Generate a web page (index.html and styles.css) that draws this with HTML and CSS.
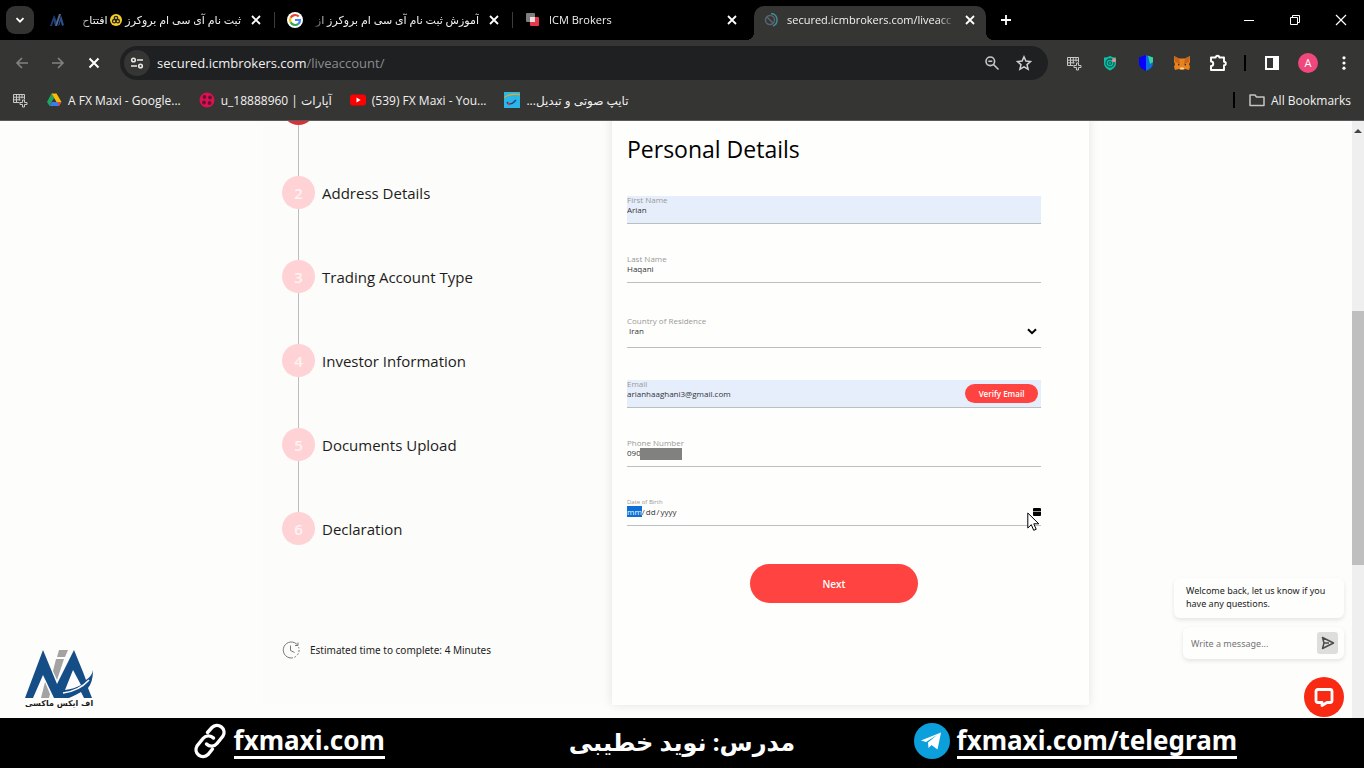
FILE: index.html
```
<!DOCTYPE html>
<html lang="en">
<head>
    <meta charset="UTF-8">
    <meta name="viewport" content="width=device-width, initial-scale=1.0">
    <title>ICM Brokers</title>
    <link rel="stylesheet" href="styles.css">
</head>
<body>
    <!-- Tabs -->
    <div class="tab-strip">
        <button class="tab-search" aria-label="Search tabs">
            <svg width="12" height="12" viewBox="0 0 12 12"><path d="M2.5 4.2 6 7.7l3.5-3.5" fill="none" stroke="#fff" stroke-width="1.8"/></svg>
        </button>
        <div class="tab">
            <svg class="favicon" viewBox="0 0 16 16"><path d="M1 14 5 3l3 7-2 4-1.500-5L3 14z" fill="#1d3f78"/><path d="m6 14 4-12h2L8 14z" fill="#56688c"/><path d="m9 14 3-11 3 10-2 1-1.500-5-1 4z" fill="#28508f"/></svg>
            <span class="tab-title" dir="rtl">ثبت نام آی سی ام بروکرز <svg class="emoji" viewBox="0 0 12 12"><circle cx="6" cy="6" r="6" fill="#f5cf2b"/><g fill="none" stroke="#2b2612" stroke-width="1.300"><circle cx="6" cy="4" r="1.700"/><circle cx="4.200" cy="7.200" r="1.700"/><circle cx="7.800" cy="7.200" r="1.700"/></g></svg> افتتاح</span>
            <button class="tab-close" aria-label="Close tab"><svg viewBox="0 0 14 14"><path d="m3 3 8 8m0-8-8 8"/></svg></button>
        </div>
        <div class="tab">
            <svg class="favicon" viewBox="0 0 16 16"><circle cx="8" cy="8" r="8" fill="#fff"/><g fill="none" stroke-width="2.200"><path d="M11.700 4.600A5 5 0 0 0 3.600 5.700" stroke="#ea4335"/><path d="M3.600 5.700a5 5 0 0 0 0 4.600" stroke="#fbbc05"/><path d="M3.600 10.300a5 5 0 0 0 7.700 1.500" stroke="#34a853"/><path d="M11.300 11.800A5 5 0 0 0 13 8H8" stroke="#4285f4"/></g></svg>
            <span class="tab-title" dir="rtl">آموزش ثبت نام آی سی ام بروکرز از</span>
            <button class="tab-close" aria-label="Close tab"><svg viewBox="0 0 14 14"><path d="m3 3 8 8m0-8-8 8"/></svg></button>
        </div>
        <div class="tab">
            <svg class="favicon" viewBox="0 0 16 16"><rect x="1" y="1" width="9" height="9" rx="1" fill="#807d7e"/><rect x="5" y="5" width="9" height="9" rx="1" fill="#e8374a"/><path d="M5 5h5v5H5z" fill="#f3dfe1"/></svg>
            <span class="tab-title">ICM Brokers</span>
            <button class="tab-close" aria-label="Close tab"><svg viewBox="0 0 14 14"><path d="m3 3 8 8m0-8-8 8"/></svg></button>
        </div>
        <div class="tab active">
            <svg class="favicon" viewBox="0 0 16 16"><circle cx="7" cy="8" r="4.500" fill="none" stroke="#5a6470" stroke-width="1.500"/><path d="m4 5 6 6" stroke="#5a6470" stroke-width="1.500"/><path d="M8 1.500A6.500 6.500 0 0 1 10 14" fill="none" stroke="#3f8a96" stroke-width="1.500"/></svg>
            <span class="tab-title">secured.icmbrokers.com/liveacc</span>
            <button class="tab-close" aria-label="Close tab"><svg viewBox="0 0 14 14"><path d="m3 3 8 8m0-8-8 8"/></svg></button>
        </div>
        <button class="new-tab" aria-label="New tab"><svg width="12" height="12" viewBox="0 0 12 12"><path d="M6 1v10M1 6h10" stroke="#fff" stroke-width="1.800"/></svg></button>
        <div class="window-buttons">
            <button aria-label="Minimize"><svg width="12" height="12" viewBox="0 0 12 12"><path d="M1 6.500h10" stroke="#fff"/></svg></button>
            <button aria-label="Restore"><svg width="12" height="12" viewBox="0 0 12 12"><path d="M1.500 3.500h7v7h-7zM3.500 3.500v-2h7v7h-2" fill="none" stroke="#fff"/></svg></button>
            <button aria-label="Close"><svg width="12" height="12" viewBox="0 0 12 12"><path d="m1 1 10 10m0-10L1 11" stroke="#fff" stroke-width="1.200"/></svg></button>
        </div>
    </div>

    <!-- Address bar -->
    <div class="toolbar">
        <button class="tool" aria-label="Back"><svg width="16" height="16" viewBox="0 0 16 16"><path d="M14 8H3m5-5L3 8l5 5" fill="none" stroke="#83827f" stroke-width="1.600"/></svg></button>
        <button class="tool" aria-label="Forward"><svg width="16" height="16" viewBox="0 0 16 16"><path d="M2 8h11M8 3l5 5-5 5" fill="none" stroke="#83827f" stroke-width="1.600"/></svg></button>
        <button class="tool" aria-label="Stop"><svg width="16" height="16" viewBox="0 0 16 16"><path d="m3.500 3.500 9 9m0-9-9 9" stroke="#fff" stroke-width="2"/></svg></button>
        <div class="omnibox">
            <button class="site-info" aria-label="Site information"><svg width="14" height="14" viewBox="0 0 14 14"><g fill="none" stroke="#e8e8e8" stroke-width="1.600"><circle cx="3.500" cy="4" r="1.800"/><path d="M7 4h6M1 10h6"/><circle cx="10.500" cy="10" r="1.800"/></g></svg></button>
            <div class="url">secured.icmbrokers.com<span>/liveaccount/</span></div>
            <button class="omni-icon" aria-label="Zoom"><svg width="16" height="16" viewBox="0 0 16 16"><g fill="none" stroke="#c7c7c7" stroke-width="1.600"><circle cx="6.300" cy="6.300" r="4.300"/><path d="m9.500 9.500 5 5M4.300 6.300h4"/></g></svg></button>
            <button class="omni-icon" aria-label="Bookmark"><svg width="16" height="16" viewBox="0 0 16 16"><path d="m8 1.800 1.900 4.300 4.600.4-3.500 3.100 1.100 4.600L8 11.800l-4.100 2.400L5 9.600 1.500 6.500l4.600-.4z" fill="none" stroke="#d0d0d0" stroke-width="1.500"/></svg></button>
        </div>
        <button class="tool" aria-label="Apps"><svg width="16" height="16" viewBox="0 0 16 16"><g fill="none" stroke="#c9c9c9"><path d="M1.500 2.500h11v5M1.500 2.500v8h6M1.500 5.200h11M1.500 7.800h7M4.500 2.500v8M7.300 2.500v6M10 2.500v4"/></g><path d="M10.500 8v2.500H8v2h2.500V15h2v-2.500H15v-2h-2.500V8z" fill="#33332f" stroke="#c9c9c9"/></svg></button>
        <button class="tool" aria-label="Shield extension"><svg width="16" height="16" viewBox="0 0 16 16"><path d="M8 1c2 1 4 1.500 6 1.500V8c0 4-3 6-6 7.500C5 14 2 12 2 8V2.500C4 2.500 6 2 8 1z" fill="#10bfa3"/><circle cx="8" cy="8" r="4" fill="none" stroke="#0b5d59" stroke-width="1.300"/><circle cx="8" cy="8" r="1.500" fill="none" stroke="#0b5d59" stroke-width="1.200"/><circle cx="12" cy="5.300" r="2" fill="#f08b8b"/></svg></button>
        <button class="tool" aria-label="Trust wallet"><svg width="16" height="16" viewBox="0 0 16 16"><path d="M8 0v16C4 14 1 12 1 8V2.500z" fill="#0500ff"/><path d="m8 0 7 2.500V8c0 4-3 6-7 8z" fill="#0b6fe0"/><path d="m10 .7 5 1.800V7l-3 2z" fill="#35d69b"/></svg></button>
        <button class="tool" aria-label="MetaMask"><svg width="18" height="16" viewBox="0 0 18 16"><path d="M1 1l5 2.500h6L17 1v6l-1 2 1 3-1 3-4-1-1.500 1h-3L6 14l-4 1-1-3 1-3-1-2z" fill="#e8821e"/><path d="m1 1 5 2.500L7 9 2 7zM17 1l-5 2.500L11 9l5-2z" fill="#c9641c"/><path d="m5 8.500 2 1.500-2 .5zm8 0L11 10l2 .5z" fill="#3b2a1f"/><path d="M7.500 12.500h3l.5 1.500H7z" fill="#f0d8c0"/></svg></button>
        <button class="tool" aria-label="Extensions"><svg width="20" height="18" viewBox="0 0 20 18"><path d="M3 3.500h4.700a1.800 1.800 0 0 1 3.600 0H16v4.200a1.800 1.800 0 0 1 0 3.600V16H3v-4a2.200 2.200 0 0 0 0-4.500z" fill="none" stroke="#fff" stroke-width="1.900" stroke-linejoin="round"/></svg></button>
        <span class="tool-separator"></span>
        <button class="tool" aria-label="Side panel"><svg width="16" height="16" viewBox="0 0 16 16"><path d="M2 2h12v12H2z" fill="none" stroke="#fff" stroke-width="2"/><path d="M9 2h5v12H9z" fill="#fff"/></svg></button>
        <button class="tool"><span class="avatar">A</span></button>
        <button class="tool" aria-label="Menu"><svg width="16" height="16" viewBox="0 0 16 16" fill="#fff"><circle cx="8" cy="2.800" r="1.600"/><circle cx="8" cy="8" r="1.600"/><circle cx="8" cy="13.200" r="1.600"/></svg></button>
    </div>

    <!-- Bookmarks -->
    <div class="bookmarks">
        <a href="#" aria-label="Apps"><svg width="16" height="16" viewBox="0 0 16 16"><g fill="none" stroke="#c9c9c9"><path d="M1.500 2.500h11v5M1.500 2.500v8h6M1.500 5.200h11M1.500 7.800h7M4.500 2.500v8M7.300 2.500v6M10 2.500v4"/></g><path d="M10.500 8v2.500H8v2h2.500V15h2v-2.500H15v-2h-2.500V8z" fill="#33332f" stroke="#c9c9c9"/></svg></a>
        <a href="#"><svg width="16" height="16" viewBox="0 0 16 16"><path d="M5.500 1.500 1 10l2.500 4L8 6z" fill="#21a45d"/><path d="M5.500 1.500h5L15.500 10h-5z" fill="#fbbc04"/><path d="M3.500 14 6 10h9.500L13 14z" fill="#3a7cec"/><path d="m11.500 10 1.500 4 2.500-4z" fill="#e94335"/></svg>A FX Maxi - Google...</a>
        <a href="#"><svg width="16" height="16" viewBox="0 0 16 16"><circle cx="8" cy="8" r="7.500" fill="#df0f50"/><g fill="#5d1735"><circle cx="5.500" cy="5" r="1.900"/><circle cx="11" cy="5.500" r="1.900"/><circle cx="5" cy="10.500" r="1.900"/><circle cx="10.500" cy="11" r="1.900"/></g></svg><span>u_18888960 | آپارات</span></a>
        <a href="#"><svg width="16" height="16" viewBox="0 0 16 16"><rect y="2.500" width="16" height="11" rx="3" fill="#f00"/><path d="m6.500 5.500 4.200 2.500-4.200 2.500z" fill="#fff"/></svg>(539) FX Maxi - You...</a>
        <a href="#"><svg width="16" height="16" viewBox="0 0 16 16"><path d="M0 0h16v16H0z" fill="#29b6e8"/><path d="M0 5c5-4 10-4 16-3v1.500C10 2.500 5 3 0 6z" fill="#e0a72b"/><path d="M3 10c1 3 5 2 7 0l2-2" fill="none" stroke="#2a3f77" stroke-width="1.500"/><circle cx="5" cy="12" r="1.200" fill="#d13838"/></svg><span dir="rtl">تایپ صوتی و تبدیل...</span></a>
        <a href="#" class="all-bookmarks"><svg width="16" height="16" viewBox="0 0 16 16"><path d="M1 3h5l1.500 2H15v8.500H1z" fill="none" stroke="#c4c4c4" stroke-width="1.500" stroke-linejoin="round"/></svg>All Bookmarks</a>
    </div>

    <!-- Page -->
    <main class="viewport">
        <div class="page">
            <div class="account">
                <aside class="stepper">
                    <ol class="steps">
                        <li class="done"><span class="circle"></span></li>
                        <li><span class="circle">2</span>Address Details</li>
                        <li><span class="circle">3</span>Trading Account Type</li>
                        <li><span class="circle">4</span>Investor Information</li>
                        <li><span class="circle">5</span>Documents Upload</li>
                        <li><span class="circle">6</span>Declaration</li>
                    </ol>
                    <p class="estimate">
                        <svg width="18" height="18" viewBox="0 0 18 18"><g fill="none" stroke="#777"><path d="M15.500 4A8 8 0 1 0 9 17"/><path d="M9 17a8 8 0 0 0 7.500-11" stroke-dasharray="2 1.500"/><path d="M8.500 4.500v5l4 2M13 4.500h3v-3"/></g></svg>
                        Estimated time to complete: 4 Minutes
                    </p>
                </aside>
                <form class="card">
                    <h1>Personal Details</h1>
                    <div class="field filled">
                        <label for="firstName">First Name</label>
                        <input type="text" id="firstName" value="Arian">
                    </div>
                    <div class="field">
                        <label for="lastName">Last Name</label>
                        <input type="text" id="lastName" value="Haqani">
                    </div>
                    <div class="field country">
                        <label for="country">Country of Residence</label>
                        <select id="country"><option>Iran</option></select>
                        <svg class="chevron" width="10" height="7" viewBox="0 0 10 7"><path d="m1 1.200 4 4 4-4" fill="none" stroke="#000" stroke-width="2"/></svg>
                    </div>
                    <div class="field filled">
                        <label for="email">Email</label>
                        <input type="email" id="email" value="arianhaaghani3@gmail.com">
                        <button type="button" class="verify">Verify Email</button>
                    </div>
                    <div class="field">
                        <label for="phone">Phone Number</label>
                        <input type="tel" id="phone" value="090">
                        <span class="redacted"></span>
                    </div>
                    <div class="field birth">
                        <label for="birth">Date of Birth</label>
                        <input type="date" id="birth">
                        <svg class="cursor" width="13" height="20" viewBox="0 0 13 20"><path d="M.8 1v15l3.500-3.300 2.400 5.600 2.500-1-2.400-5.500h5z" fill="#fff" stroke="#000"/></svg>
                    </div>
                    <button type="button" class="next">Next</button>
                </form>
            </div>

            <div class="watermark">
                <svg width="68" height="48" viewBox="0 0 68 48"><path d="M0 48 18 0l14 34L49 0l9 22 3 8q6-4 7-10 0 12-5 18l4 10h-8l-3-6q-5 3-12 6H29L18 25 8 48z" fill="#154d87"/><path d="m48 20-8 20q9-1 16-5z" fill="#fdfdfb"/><path d="M38 43q16-2 26-13" fill="none" stroke="#fdfdfb" stroke-width="1.500"/><path d="M34 0h9l-3 7h-8zM31 9h8l-7 21-4-9zM20 32l5 12-1 4h-8z" fill="#a3a3a3"/></svg>
                <span dir="rtl">اف ایکس ماکسی</span>
            </div>

            <div class="chat">
                <p class="chat-bubble">Welcome back, let us know if you have any questions.</p>
                <div class="chat-box">
                    <input type="text" placeholder="Write a message..." aria-label="Write a message">
                    <button class="send" aria-label="Send"><svg width="14" height="14" viewBox="0 0 14 14"><path d="m1.500 1.500 11 5.500-11 5.500L3 7zM3 7h5" fill="none" stroke="#4b4b4b" stroke-width="1.500" stroke-linejoin="round"/></svg></button>
                </div>
                <button class="chat-toggle" aria-label="Chat"><svg width="20" height="20" viewBox="0 0 20 20"><path d="M4 2.500h12q2 0 2 2v9q0 2-2 2h-3L8 18.500v-3H4q-2 0-2-2v-9q0-2 2-2z" fill="none" stroke="#fff" stroke-width="2.800" stroke-linejoin="round"/></svg></button>
            </div>
        </div>
        <div class="scrollbar">
            <svg width="8" height="5" viewBox="0 0 8 5"><path d="m0 5 4-4 4 4z" fill="#444"/></svg>
            <div class="thumb"></div>
        </div>
    </main>

    <!-- Banner -->
    <footer class="banner">
        <div class="banner-item">
            <svg width="34" height="36" viewBox="0 0 34 36"><g fill="none" stroke="#fff" stroke-width="3.400" stroke-linecap="round"><path d="M14.500 9.500 19 4.500a7 7 0 0 1 11 8.500l-6 7.500a7 7 0 0 1-10.500.5"/><path d="m19.500 26-4.500 5.500A7 7 0 0 1 4 23l6-7.500a7 7 0 0 1 10.500-.5"/></g></svg>
            <a href="#">fxmaxi.com</a>
        </div>
        <div class="banner-item teacher" dir="rtl">مدرس: نوید خطیبی</div>
        <div class="banner-item">
            <svg width="36" height="36" viewBox="0 0 36 36"><circle cx="18" cy="18" r="18" fill="#0ba0dc"/><path d="m7 17.500 20-8-3.500 17-6-4.500-3 3-.5-5.500 9-7.500-11 7z" fill="#fff"/></svg>
            <a href="#">fxmaxi.com/telegram</a>
        </div>
    </footer>
</body>
</html>
```
FILE: styles.css
```
* {
    box-sizing: border-box;
}
body {
    margin: 0;
    height: 100vh;
    display: flex;
    flex-direction: column;
    font-family: "Open Sans", "DejaVu Sans", sans-serif;
    color: #1c1c1c;
    overflow: hidden;
}
button {
    font-family: inherit;
    border: none;
    padding: 0;
    background: none;
    display: flex;
    align-items: center;
    justify-content: center;
    cursor: pointer;
}
svg {
    flex: none;
}

/* tabs */
.tab-strip {
    height: 40px;
    flex: none;
    display: flex;
    align-items: center;
    background: #000;
    padding-left: 6px;
}
.tab-search {
    width: 28px;
    height: 28px;
    margin-right: 3px;
    border-radius: 9px;
    background: #333331;
}
.tab {
    position: relative;
    flex: 0 1 238px;
    min-width: 0;
    height: 34px;
    align-self: flex-end;
    display: flex;
    align-items: center;
    gap: 8px;
    padding: 0 12px 6px;
    color: #f1f1f1;
}
.tab:not(.active)::after {
    content: "";
    position: absolute;
    right: 0;
    width: 1px;
    height: 16px;
    background: #3c3c3c;
}
.tab:nth-child(4)::after {
    display: none;
}
.tab.active {
    flex-basis: 232px;
    margin: 0 3px;
    padding: 0 9px 6px;
    background: #353533;
    border-radius: 10px 10px 0 0;
}
.tab.active::before,
.tab.active::after {
    content: "";
    position: absolute;
    bottom: 0;
    width: 8px;
    height: 8px;
}
.tab.active::before {
    right: 100%;
    background: radial-gradient(circle at 0 0, transparent 8px, #353533 8px);
}
.tab.active::after {
    left: 100%;
    background: radial-gradient(circle at 100% 0, transparent 8px, #353533 8px);
}
.favicon {
    width: 16px;
    height: 16px;
}
.tab-title {
    flex: 1;
    min-width: 0;
    overflow: hidden;
    white-space: nowrap;
    font-size: 11px;
    line-height: 20px;
    -webkit-mask-image: linear-gradient(to right, #000 90%, transparent);
    mask-image: linear-gradient(to right, #000 90%, transparent);
}
.tab-title[dir="rtl"] {
    -webkit-mask-image: linear-gradient(to left, #000 90%, transparent);
    mask-image: linear-gradient(to left, #000 90%, transparent);
}
.emoji {
    width: 12px;
    height: 12px;
    vertical-align: -2px;
}
.tab-close svg {
    width: 14px;
    height: 14px;
    stroke: #fff;
    stroke-width: 1.8;
}
.new-tab {
    width: 28px;
    height: 28px;
    margin-left: 3px;
}
.window-buttons {
    display: flex;
    margin-left: auto;
}
.window-buttons button {
    width: 46px;
    height: 40px;
}

/* toolbar */
.toolbar {
    height: 46px;
    flex: none;
    display: flex;
    align-items: center;
    background: #353533;
    padding: 0 2px 0 4px;
}
.tool {
    width: 36px;
    height: 34px;
    flex: none;
}
.omnibox {
    flex: 1;
    min-width: 0;
    height: 34px;
    display: flex;
    align-items: center;
    margin: 0 8px;
    padding: 0 8px 0 4px;
    border-radius: 17px;
    background: #1f2022;
}
.site-info {
    width: 26px;
    height: 26px;
    border-radius: 13px;
    background: #353533;
}
.url {
    flex: 1;
    padding-left: 7px;
    font-size: 13px;
    color: #f0f0f0;
}
.url span {
    color: #8d8d8d;
}
.omni-icon {
    width: 32px;
    height: 32px;
}
.tool-separator {
    width: 2px;
    height: 16px;
    margin: 0 8px;
    background: #000;
}
.avatar {
    width: 20px;
    height: 20px;
    border-radius: 10px;
    background: #f0487c;
    color: #fff;
    font-size: 11px;
    line-height: 20px;
}

/* bookmarks */
.bookmarks {
    height: 35px;
    flex: none;
    display: flex;
    align-items: center;
    gap: 18px;
    padding: 0 13px 6px 12px;
    background: #353533;
    border-bottom: 1px solid #5b5b5b;
}
.bookmarks a {
    display: flex;
    align-items: center;
    gap: 6px;
    height: 28px;
    color: #f1f1f1;
    font-size: 12px;
    text-decoration: none;
    white-space: nowrap;
}
.bookmarks .all-bookmarks {
    margin-left: auto;
}
.all-bookmarks::before {
    content: "";
    width: 2px;
    height: 16px;
    margin-right: 8px;
    background: #000;
}

/* page */
.viewport {
    flex: 1;
    min-height: 0;
    display: flex;
    background: #fdfdfb;
}
.page {
    position: relative;
    flex: 1;
    min-width: 0;
    overflow: hidden;
}
.account {
    display: grid;
    grid-template-columns: 349px 1fr;
    max-width: 826px;
    /* scrolled part of the form */
    margin: -29px auto 0;
}
.stepper {
    padding-left: 19px;
    background: #fcfcfa;
}
.steps {
    list-style: none;
    margin: 0;
    padding: 0;
}
.steps li {
    position: relative;
    display: flex;
    align-items: center;
    gap: 7px;
    height: 33px;
    margin-bottom: 51px;
    font-size: 15px;
}
.steps li:not(:last-child)::after {
    content: "";
    position: absolute;
    left: 16px;
    top: 33px;
    width: 1px;
    height: 51px;
    background: #bdbdbd;
}
.circle {
    width: 33px;
    height: 33px;
    border-radius: 17px;
    background: #ffd2d6;
    color: #fff3f3;
    font-size: 15px;
    font-weight: 600;
    line-height: 35px;
    text-align: center;
}
.done .circle {
    background: #d83236;
}
.estimate {
    display: flex;
    align-items: center;
    gap: 10px;
    margin: 96px 0 0;
    font-family: "Noto Sans", sans-serif;
    font-size: 10px;
    line-height: 18px;
}
.card {
    padding: 40px 48px 102px 15px;
    background: #fefefd;
    box-shadow: 0 0 10px rgba(0, 0, 0, 0.1);
}
h1 {
    margin: 0 0 30px;
    font-size: 23px;
    line-height: 34px;
    font-weight: 400;
    color: #000;
}
.field {
    position: relative;
    height: 28px;
    margin-bottom: 31px;
    border-bottom: 1px solid #bcbfc2;
    font-size: 8px;
}
.field label {
    display: block;
    font-size: 8px;
    line-height: 8px;
    color: #999;
}
.field input,
.field select {
    display: block;
    width: 100%;
    height: 11px;
    padding: 0;
    border: none;
    outline: none;
    background: none;
    appearance: none;
    font-family: inherit;
    font-size: 8px;
    line-height: 11px;
    color: #333;
}
.field select {
    padding-left: 2px;
}
.filled {
    background: #e6eefb;
}
.country {
    height: 31px;
    margin-top: 34px;
    margin-bottom: 32px;
}
.chevron {
    position: absolute;
    right: 4px;
    top: 11px;
}
.verify {
    position: absolute;
    right: 3px;
    top: 4px;
    width: 73px;
    height: 19px;
    border-radius: 10px;
    background: #ff4340;
    color: #fff;
    font-size: 8px;
    font-weight: 600;
}
.redacted {
    position: absolute;
    left: 13px;
    top: 9px;
    width: 42px;
    height: 12px;
    background: #81817f;
}
.birth label {
    font-size: 6px;
}
input::-webkit-datetime-edit-fields-wrapper,
input::-webkit-datetime-edit {
    padding: 0;
}
input::-webkit-datetime-edit-month-field {
    padding: 0;
    background: #0a6fd6;
    color: #fff;
}
input::-webkit-calendar-picker-indicator {
    width: 8px;
    height: 8px;
    margin: 0;
    padding: 0;
    border-radius: 1px;
    background: linear-gradient(#000 3px, #999 3px, #999 4px, #000 4px);
}
.cursor {
    position: absolute;
    right: 1px;
    top: 14px;
}
.next {
    width: 168px;
    height: 39px;
    margin: 38px auto 0;
    border-radius: 20px;
    background: #ff4340;
    color: #fff;
    font-size: 10px;
    font-weight: 600;
}

/* watermark */
.watermark {
    position: absolute;
    left: 25px;
    bottom: 8px;
    display: flex;
    flex-direction: column;
    align-items: center;
    font-family: "DejaVu Sans", sans-serif;
    font-size: 8px;
    line-height: 12px;
    font-weight: 700;
    white-space: nowrap;
}

/* chat */
.chat {
    position: absolute;
    right: 8px;
    bottom: 1px;
    width: 170px;
    display: flex;
    flex-direction: column;
    align-items: flex-end;
    font-family: "Noto Sans", sans-serif;
}
.chat-bubble {
    width: 100%;
    margin: 0 0 9px;
    padding: 6px 12px 8px;
    border-radius: 6px;
    background: #fefefd;
    box-shadow: 0 2px 4px rgba(0, 0, 0, 0.1);
    font-size: 9px;
    line-height: 13px;
}
.chat-box {
    display: flex;
    align-items: center;
    width: 161px;
    height: 32px;
    padding: 0 6px 0 8px;
    border-radius: 6px;
    background: #fefefd;
    box-shadow: 0 2px 4px rgba(0, 0, 0, 0.1);
}
.chat-box input {
    flex: 1;
    min-width: 0;
    padding: 0;
    border: none;
    background: none;
    font-family: inherit;
    font-size: 9px;
}
.send {
    width: 21px;
    height: 22px;
    border-radius: 3px;
    background: #dededc;
}
.chat-toggle {
    width: 40px;
    height: 40px;
    margin-top: 18px;
    border-radius: 20px;
    background: #f92a14;
}
.scrollbar {
    width: 12px;
    padding-top: 7px;
    background: #efefef;
    display: flex;
    flex-direction: column;
    align-items: center;
}
.thumb {
    width: 100%;
    height: 43%;
    margin-top: 178px;
    background: #bfbfbf;
}

/* banner */
.banner {
    height: 50px;
    flex: none;
    display: grid;
    grid-template-columns: repeat(3, 1fr);
    padding: 0 92px;
    background: #000;
    color: #fff;
    font-family: "Noto Sans", "DejaVu Sans", sans-serif;
    font-weight: 700;
    font-size: 26px;
}
.banner-item {
    display: flex;
    align-items: center;
    justify-content: center;
    gap: 7px;
    padding-bottom: 4px;
    white-space: nowrap;
}
.teacher {
    font-size: 24px;
}
.banner a {
    color: #fff;
    text-decoration: none;
    line-height: 32px;
    border-bottom: 3px solid #fff;
}
```
